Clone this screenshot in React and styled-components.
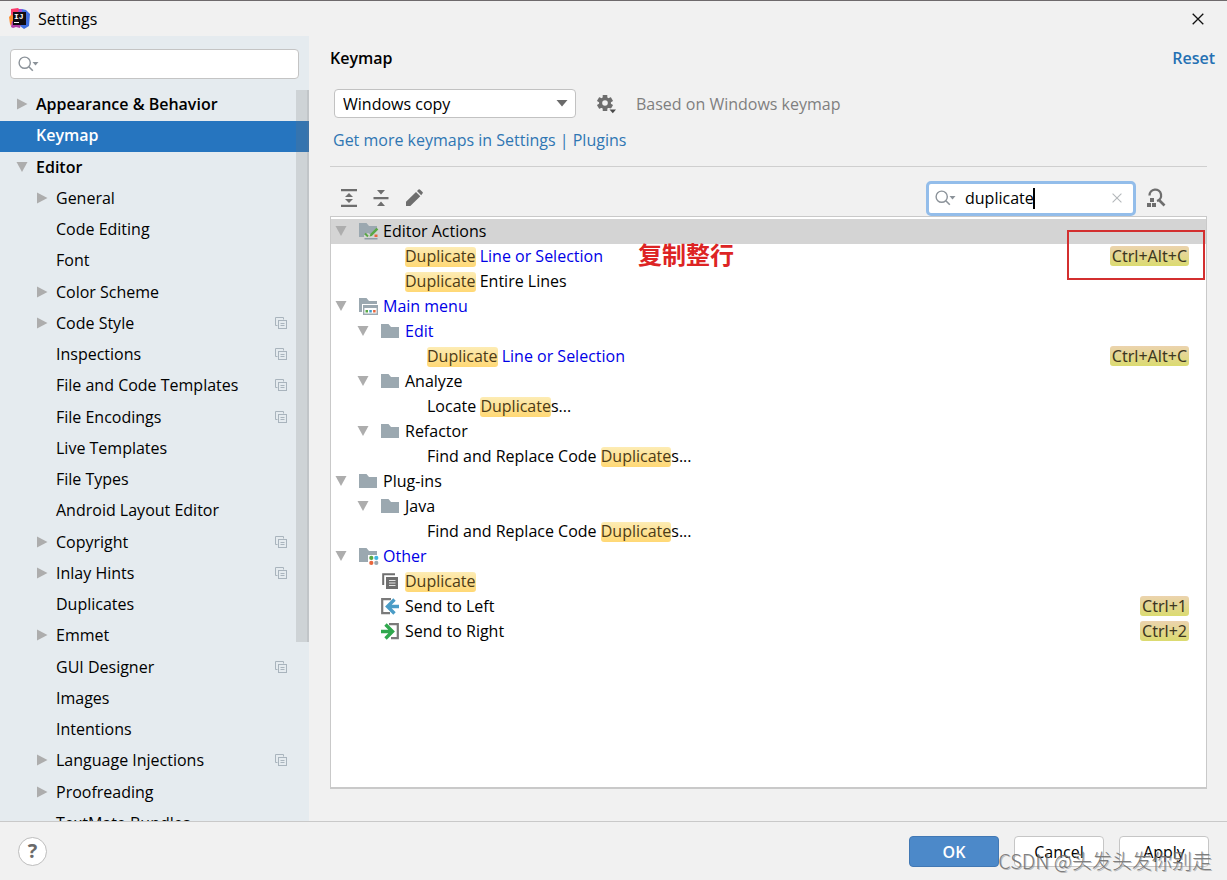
import React, { useState } from 'react';
import styled, { createGlobalStyle, css } from 'styled-components';

const GlobalStyle = createGlobalStyle`
  *, *::before, *::after { box-sizing: border-box; }
  body {
    margin: 0;
    background: #f1f1f1;
    color: #000;
    font-family: "Open Sans", "Noto Sans CJK SC", sans-serif;
    font-size: 16px;
    line-height: 24px;
  }
  button, input, select { font: inherit; color: inherit; }
  ul { list-style: none; margin: 0; padding: 0; }
  svg { display: block; flex: none; }
`;

const Window = styled.div`
  position: relative;
  display: flex;
  flex-direction: column;
  height: 100vh;
  overflow: hidden;
  border-top: 1px solid #6e6a6c;
`;

const TitleBar = styled.header`
  display: flex;
  align-items: center;
  gap: 8px;
  flex: none;
  height: 35px;
  padding: 0 23px 0 9px;
`;

const WindowTitle = styled.span`
  flex: 1;
`;

const PlainButton = styled.button`
  display: inline-flex;
  align-items: center;
  justify-content: center;
  flex: none;
  padding: 0;
  border: 0;
  background: none;
  cursor: pointer;
`;

const Body = styled.div`
  display: flex;
  flex: 1;
  min-height: 0;
`;

const Sidebar = styled.aside`
  position: relative;
  display: flex;
  flex-direction: column;
  flex: none;
  width: 309px;
  overflow: hidden;
  background: #e5ebef;
`;

const SidebarSearch = styled.label`
  display: flex;
  align-items: center;
  gap: 4px;
  flex: none;
  height: 30px;
  margin: 13px 10px 11px;
  padding: 0 7px;
  border: 1px solid #c4c4c4;
  border-radius: 4px;
  background: #fff;
`;

const BareInput = styled.input`
  min-width: 0;
  padding: 0;
  border: 0;
  outline: 0;
  background: transparent;
  ${(p) => (p.$fit ? css`field-sizing: content; caret-color: transparent;` : css`flex: 1;`)}
`;

const CategoryRow = styled.li`
  height: 31px;
  &:nth-child(4n + 3) { height: 32px; }
`;

const CategoryLink = styled.a`
  display: flex;
  align-items: center;
  height: 100%;
  padding: 0 22px 3px ${(p) => (p.$nested ? 36 : 16)}px;
  color: ${(p) => (p.$selected ? '#fff' : '#000')};
  background: ${(p) => (p.$selected ? '#2675bf' : 'transparent')};
  font-weight: ${(p) => (p.$nested ? 400 : 600)};
  text-decoration: none;
`;

const CategoryArrow = styled.span`
  flex: none;
  width: 20px;
  color: #adadad;
`;

const CategoryName = styled.span`
  flex: 1;
  white-space: nowrap;
`;

const ScrollThumb = styled.div`
  position: absolute;
  top: 54px;
  right: 0;
  width: 13px;
  height: 552px;
  border-right: 2px solid rgba(120, 120, 120, 0.15);
  background: rgba(115, 115, 115, 0.2);
`;

const Main = styled.main`
  display: flex;
  flex-direction: column;
  flex: 1;
  min-width: 0;
  padding: 10px 20px 32px 21px;
`;

const Heading = styled.div`
  display: flex;
  align-items: center;
  justify-content: space-between;
  margin-right: -8px;
`;

const PageTitle = styled.h1`
  margin: 0;
  font-size: 16px;
  font-weight: 600;
`;

const ResetLink = styled.a`
  color: #2470b3;
  font-weight: 600;
  text-decoration: none;
`;

const SchemeRow = styled.div`
  display: flex;
  align-items: center;
  margin-top: 19px;
  padding-left: 4px;
`;

const SelectBox = styled.span`
  position: relative;
  width: 242px;
`;

const SchemeSelect = styled.select`
  width: 100%;
  height: 29px;
  padding: 0 24px 0 8px;
  border: 1px solid #c2c2c2;
  border-radius: 4px;
  outline: 0;
  appearance: none;
  background: #fff;
`;

const SelectArrow = styled.svg`
  position: absolute;
  right: 8px;
  top: 11px;
  pointer-events: none;
`;

const GearButton = styled(PlainButton)`
  margin: 0 18px 0 20px;
`;

const Hint = styled.span`
  color: #7f7f7f;
`;

const PluginsLink = styled.a`
  align-self: flex-start;
  margin: 10px 0 14px;
  padding-left: 3px;
  color: #2f76b3;
  text-decoration: none;
`;

const Toolbar = styled.div`
  display: flex;
  align-items: center;
  gap: 14px;
  height: 50px;
  padding: 13px 41px 0 10px;
  border-top: 1px solid #cfcfcf;
`;

const SearchField = styled.label`
  display: flex;
  align-items: center;
  width: 210px;
  height: 35px;
  margin: 0 -4px 0 auto;
  padding: 0 11px 0 6px;
  border: 3px solid #93bdea;
  border-radius: 5px;
  background: #fff;
`;

const Caret = styled.span`
  flex: none;
  width: 2px;
  height: 21px;
  margin: 0 auto 0 -1px;
  background: #000;
`;

const SearchGlyph = styled.span`
  margin-right: 9px;
`;

const TreePanel = styled.section`
  position: relative;
  flex: 1;
  min-height: 0;
  padding-top: 2px;
  border: 1px solid #c9c9c9;
  border-bottom-width: 2px;
  background: #fff;
`;

const TreeRow = styled.li`
  display: flex;
  align-items: center;
  height: 25px;
  padding: 0 17px 2px ${(p) => 4 + p.$depth * 22}px;
  background: ${(p) => (p.$selected ? '#d4d4d4' : 'transparent')};
  color: ${(p) => (p.$changed ? '#0000e6' : '#000')};
  white-space: nowrap;
`;

const TreeArrow = styled.span`
  flex: none;
  width: 24px;
  color: #adadad;
`;

const TreeIcon = styled.span`
  flex: none;
  width: 24px;
`;

const TreeText = styled.span`
  flex: 1;
`;

const Match = styled.mark`
  display: inline-block;
  height: 20px;
  border-radius: 3px;
  background: linear-gradient(#fdecb4, #ffd875);
  color: #4c3b17;
  line-height: 19px;
`;

const Shortcut = styled.kbd`
  height: 20px;
  padding: 0 2px;
  border-radius: 3px;
  background: linear-gradient(#ecd3ae, #dbdb70);
  color: #3d3620;
  font-family: "Noto Sans", sans-serif;
  line-height: 20px;
`;

const NoteText = styled.strong`
  position: absolute;
  top: 19px;
  left: 307px;
  color: #dd2424;
  font-family: "Noto Sans CJK SC", sans-serif;
  font-size: 24px;
  line-height: 36px;
`;

const NoteBox = styled.div`
  position: absolute;
  top: 13px;
  right: 1px;
  width: 138px;
  height: 50px;
  border: 2px solid #d32f2f;
`;

const Footer = styled.footer`
  display: flex;
  align-items: center;
  gap: 15px;
  flex: none;
  height: 59px;
  padding: 0 18px;
  border-top: 1px solid #c9c9c9;
`;

const HelpButton = styled(PlainButton)`
  width: 29px;
  height: 29px;
  margin-right: auto;
  border: 1px solid #bdbdbd;
  border-radius: 50%;
  background: #fff;
  color: #6a6a6a;
  font-size: 20px;
  font-weight: 700;
`;

const DialogButton = styled.button`
  width: 90px;
  height: 31px;
  padding: 2px 0 0;
  border: 1px solid ${(p) => (p.$primary ? '#4178b4' : '#c6c6c6')};
  border-radius: 4px;
  background: ${(p) => (p.$primary ? '#4c89c9' : '#fff')};
  color: ${(p) => (p.$primary ? '#fff' : '#000')};
  font-weight: ${(p) => (p.$primary ? 600 : 400)};
`;

const Watermark = styled.span`
  position: absolute;
  right: 15px;
  bottom: 6px;
  color: rgba(110, 110, 110, 0.9);
  font-family: "Noto Sans CJK SC", sans-serif;
  font-size: 20px;
  font-weight: 300;
  line-height: 26px;
  text-shadow: 1px 1px 0 rgba(150, 150, 150, 0.6);
  pointer-events: none;
`;

const Logo = () => (
  <svg width="21" height="21" viewBox="0 0 21 21" aria-hidden="true">
    <path d="M2 1 9 0l3 3-2 8-9 2 1-4z" fill="#fb3a6b" />
    <path d="M0 9l3-3 2 5-3 7-1-2z" fill="#fc8c2f" />
    <path d="M13 1l4 1 4 4-1 12-5 3-4-3z" fill="#3f6fe0" />
    <path d="M2 19l1-6 9 2-1 5-4-1-3 1z" fill="#b03fa8" />
    <path d="M10 1l3 0v4H9z" fill="#a04ad0" />
    <rect x="4" y="4" width="13" height="13" fill="#100c12" />
    <rect x="5" y="14" width="5" height="1" fill="#fff" />
    <text x="5" y="11" fill="#fff" fontSize="8" fontWeight="700" fontFamily="Liberation Mono, monospace">IJ</text>
  </svg>
);

const CloseIcon = ({ size = 12, color = '#111', weight = 1.3 }) => (
  <svg width={size} height={size} viewBox="0 0 12 12" stroke={color} strokeWidth={weight} aria-hidden="true">
    <path d="M.7.7l10.6 10.6M11.3.7L.7 11.3" />
  </svg>
);

const SearchIcon = () => (
  <svg width="21" height="16" viewBox="0 0 21 16" aria-hidden="true">
    <circle cx="6.7" cy="6.7" r="5.6" fill="none" stroke="#8b9299" strokeWidth="1.4" />
    <path d="M10.8 10.8l4 4" stroke="#8b9299" strokeWidth="1.6" />
    <path d="M14.5 6h6L17.500 9.500z" fill="#8b9299" />
  </svg>
);

const Triangle = ({ open }) =>
  open ? (
    <svg width="12" height="12" viewBox="0 0 12 12" aria-hidden="true">
      <path d="M.5 1h11L6 11z" fill="currentColor" />
    </svg>
  ) : (
    <svg width="12" height="12" viewBox="0 0 12 12" aria-hidden="true">
      <path d="M1 .5v11L11.500 6z" fill="currentColor" />
    </svg>
  );

const ProjectIcon = () => (
  <svg width="12" height="12" viewBox="0 0 12 12" fill="none" stroke="#a9b4bd" aria-hidden="true">
    <path d="M2.500 8.500h-2v-8h8v2" />
    <rect x="3.500" y="3.500" width="8" height="8" />
    <path d="M5.500 6.500h4M5.500 8.500h4" />
  </svg>
);

const GearIcon = () => (
  <svg width="22" height="20" viewBox="0 0 22 20" aria-hidden="true">
    <g fill="#6e6e6e">
      {[0, 60, 120].map((a) => (
        <rect key={a} x="6.700" y="1" width="4.600" height="16" rx=".5" transform={`rotate(${a} 9 9)`} />
      ))}
      <circle cx="9" cy="9" r="6" />
    </g>
    <circle cx="9" cy="9" r="2.800" fill="#f1f1f1" />
    <path d="M12 14.500h9l-4.500 5z" fill="#f1f1f1" />
    <path d="M13.500 15.500h6.500l-3.200 3.700z" fill="#4a4a4a" />
  </svg>
);

const ExpandIcon = () => (
  <svg width="18" height="18" viewBox="0 0 18 18" fill="#6e6e6e" aria-hidden="true">
    <path d="M1 0h16v2.200H1zM1 15.800h16V18H1zM5 8l4-4 4 4zM5 10h8l-4 4z" />
  </svg>
);

const CollapseIcon = () => (
  <svg width="18" height="18" viewBox="0 0 18 18" fill="#6e6e6e" aria-hidden="true">
    <path d="M1.500 8h15v2.200h-15zM5 1h8L9 5.500zM5 17h8l-4-4.500z" />
  </svg>
);

const PencilIcon = () => (
  <svg width="20" height="18" viewBox="0 0 20 18" fill="#6e6e6e" aria-hidden="true">
    <path d="M2 17v-4.200L12 3l4.300 4.300L6.300 17zM13 2l1.500-1.500q.7-.6 1.400 0l2.600 2.600q.7.700 0 1.400L17.200 6.200z" />
  </svg>
);

const ShortcutSearchIcon = () => (
  <svg width="20" height="20" viewBox="0 0 20 20" aria-hidden="true">
    <path d="M3.500 7.500A5.800 5.800 0 1 1 11 13" fill="none" stroke="#6e6e6e" strokeWidth="2.300" />
    <path d="M12.500 11.500l6 6" stroke="#6e6e6e" strokeWidth="2.600" />
    <path d="M4 10h4v4H4zM1 15h4v4H1zM6 15h4v4H6z" fill="#6e6e6e" />
  </svg>
);

const FolderIcon = () => (
  <svg width="20" height="19" viewBox="0 0 20 19" aria-hidden="true">
    <path d="M0 3h7.500l2.500 3h8v11H0z" fill="#9ba8b0" />
  </svg>
);

const EditorFolderIcon = () => (
  <svg width="20" height="19" viewBox="0 0 20 19" aria-hidden="true">
    <path d="M0 2h7.500l2.500 3h8v3l-6 6-3-2-4 2v2H0z" fill="#9ba8b0" />
    <path d="M10.500 15.500l1-2.800L17.500 6.700l1.800 1.800-6.500 6.500z" fill="#59a844" />
    <path d="M6 12.500l3 3" stroke="#59a844" strokeWidth="2" />
    <path d="M15.500 13.500h3v2.500h-3z" fill="#e8663c" />
    <path d="M5.500 17h13v1.500h-13z" fill="#8f9da6" />
  </svg>
);

const MenuFolderIcon = () => (
  <svg width="20" height="19" viewBox="0 0 20 19" aria-hidden="true">
    <path d="M0 2h7.500l2.500 3h8v3H3v8H0z" fill="#9ba8b0" />
    <path d="M4.700 9.700h13.600v8.600H4.700z" fill="#fff" stroke="#9ba8b0" strokeWidth="1.400" />
    <path d="M4 9h15v3H4z" fill="#9ba8b0" />
    <path d="M6.500 14H9v2.500H6.500z" fill="#59a844" />
    <path d="M10.300 14h2.500v2.500h-2.500z" fill="#3f9cc9" />
    <path d="M14.100 14h2.500v2.500h-2.500z" fill="#e8663c" />
  </svg>
);

const OtherFolderIcon = () => (
  <svg width="20" height="19" viewBox="0 0 20 19" aria-hidden="true">
    <path d="M0 2h7.500l2.500 3h8v4H9v7H0z" fill="#9ba8b0" />
    <circle cx="12.300" cy="11.900" r="2.100" fill="#59a844" />
    <circle cx="17.300" cy="11.900" r="2.100" fill="#40b6e0" />
    <circle cx="12.300" cy="16.900" r="2.100" fill="#e8663c" />
    <circle cx="17.300" cy="16.900" r="2.100" fill="#9ba8b0" />
  </svg>
);

const DuplicateIcon = () => (
  <svg width="20" height="19" viewBox="0 0 20 19" aria-hidden="true">
    <path d="M2.200 14V3.200H14" fill="none" stroke="#6e6e6e" strokeWidth="2" />
    <path d="M5 6h12v12H5z" fill="#6e6e6e" />
    <path d="M8 9.500h6.500M8 12h6.500M8 14.500h6.500" stroke="#e3e3e3" strokeWidth="1.200" />
  </svg>
);

const SendLeftIcon = () => (
  <svg width="20" height="19" viewBox="0 0 20 19" fill="none" aria-hidden="true">
    <path d="M10 3.200H1.200V17.200H9" stroke="#7a7a7a" strokeWidth="2.200" />
    <path d="M13.500 3.500L6.500 10.500l7 7M7 10.500h11" stroke="#4a9cc6" strokeWidth="3.400" />
  </svg>
);

const SendRightIcon = () => (
  <svg width="20" height="19" viewBox="0 0 20 19" fill="none" aria-hidden="true">
    <path d="M8 3.200h8.800V17.200H10" stroke="#7a7a7a" strokeWidth="2.200" />
    <path d="M4.500 3.500l7 7-7 7M11 10.500H0" stroke="#2fa84d" strokeWidth="3.400" />
  </svg>
);

const categories = [
  { name: 'Appearance & Behavior', top: true, arrow: 'closed' },
  { name: 'Keymap', top: true, selected: true },
  { name: 'Editor', top: true, arrow: 'open' },
  { name: 'General', arrow: 'closed' },
  { name: 'Code Editing' },
  { name: 'Font' },
  { name: 'Color Scheme', arrow: 'closed' },
  { name: 'Code Style', arrow: 'closed', project: true },
  { name: 'Inspections', project: true },
  { name: 'File and Code Templates', project: true },
  { name: 'File Encodings', project: true },
  { name: 'Live Templates' },
  { name: 'File Types' },
  { name: 'Android Layout Editor' },
  { name: 'Copyright', arrow: 'closed', project: true },
  { name: 'Inlay Hints', arrow: 'closed', project: true },
  { name: 'Duplicates' },
  { name: 'Emmet', arrow: 'closed' },
  { name: 'GUI Designer', project: true },
  { name: 'Images' },
  { name: 'Intentions' },
  { name: 'Language Injections', arrow: 'closed', project: true },
  { name: 'Proofreading', arrow: 'closed' },
  { name: 'TextMate Bundles' },
];

const actions = [
  { depth: 0, group: true, icon: <EditorFolderIcon />, text: 'Editor Actions', selected: true },
  { depth: 1, text: 'Duplicate Line or Selection', changed: true, keys: 'Ctrl+Alt+C' },
  { depth: 1, text: 'Duplicate Entire Lines' },
  { depth: 0, group: true, icon: <MenuFolderIcon />, text: 'Main menu', changed: true },
  { depth: 1, group: true, icon: <FolderIcon />, text: 'Edit', changed: true },
  { depth: 2, text: 'Duplicate Line or Selection', changed: true, keys: 'Ctrl+Alt+C' },
  { depth: 1, group: true, icon: <FolderIcon />, text: 'Analyze' },
  { depth: 2, text: 'Locate Duplicates...' },
  { depth: 1, group: true, icon: <FolderIcon />, text: 'Refactor' },
  { depth: 2, text: 'Find and Replace Code Duplicates...' },
  { depth: 0, group: true, icon: <FolderIcon />, text: 'Plug-ins' },
  { depth: 1, group: true, icon: <FolderIcon />, text: 'Java' },
  { depth: 2, text: 'Find and Replace Code Duplicates...' },
  { depth: 0, group: true, icon: <OtherFolderIcon />, text: 'Other', changed: true },
  { depth: 1, icon: <DuplicateIcon />, text: 'Duplicate' },
  { depth: 1, icon: <SendLeftIcon />, text: 'Send to Left', keys: 'Ctrl+1' },
  { depth: 1, icon: <SendRightIcon />, text: 'Send to Right', keys: 'Ctrl+2' },
];

function Highlighted({ text }) {
  return text
    .split(/(Duplicate)/)
    .map((part, i) => (part === 'Duplicate' ? <Match key={i}>{part}</Match> : part));
}

export default function App() {
  const [query, setQuery] = useState('duplicate');
  const [filter, setFilter] = useState('');

  return (
    <Window>
      <GlobalStyle />
      <TitleBar>
        <Logo />
        <WindowTitle>Settings</WindowTitle>
        <PlainButton aria-label="Close"><CloseIcon /></PlainButton>
      </TitleBar>

      <Body>
        <Sidebar>
          <SidebarSearch>
            <SearchIcon />
            <BareInput aria-label="Search settings" value={filter} onChange={(e) => setFilter(e.target.value)} />
          </SidebarSearch>
          <nav>
            <ul>
              {categories.map((c) => (
                <CategoryRow key={c.name}>
                  <CategoryLink href="#" $nested={!c.top} $selected={c.selected}>
                    <CategoryArrow>{c.arrow && <Triangle open={c.arrow === 'open'} />}</CategoryArrow>
                    <CategoryName>{c.name}</CategoryName>
                    {c.project && <ProjectIcon />}
                  </CategoryLink>
                </CategoryRow>
              ))}
            </ul>
          </nav>
          <ScrollThumb />
        </Sidebar>

        <Main>
          <Heading>
            <PageTitle>Keymap</PageTitle>
            <ResetLink href="#">Reset</ResetLink>
          </Heading>
          <SchemeRow>
            <SelectBox>
              <SchemeSelect aria-label="Keymap scheme">
                <option>Windows copy</option>
              </SchemeSelect>
              <SelectArrow width="12" height="7" viewBox="0 0 12 7" aria-hidden="true">
                <path d="M.5 0h11L6 6.500z" fill="#6a6a6a" />
              </SelectArrow>
            </SelectBox>
            <GearButton aria-label="Scheme actions"><GearIcon /></GearButton>
            <Hint>Based on Windows keymap</Hint>
          </SchemeRow>
          <PluginsLink href="#">Get more keymaps in Settings | Plugins</PluginsLink>

          <Toolbar>
            <PlainButton aria-label="Expand all"><ExpandIcon /></PlainButton>
            <PlainButton aria-label="Collapse all"><CollapseIcon /></PlainButton>
            <PlainButton aria-label="Edit shortcut"><PencilIcon /></PlainButton>
            <SearchField>
              <SearchGlyph><SearchIcon /></SearchGlyph>
              <BareInput $fit aria-label="Search actions" value={query} onChange={(e) => setQuery(e.target.value)} />
              <Caret />
              <PlainButton aria-label="Clear" onClick={() => setQuery('')}>
                <CloseIcon size={10} color="#b4b8bb" />
              </PlainButton>
            </SearchField>
            <PlainButton aria-label="Find by shortcut"><ShortcutSearchIcon /></PlainButton>
          </Toolbar>

          <TreePanel>
            <ul>
              {actions.map((a, i) => (
                <TreeRow key={i} $depth={a.depth} $selected={a.selected} $changed={a.changed}>
                  <TreeArrow>{a.group && <Triangle open />}</TreeArrow>
                  <TreeIcon>{a.icon}</TreeIcon>
                  <TreeText><Highlighted text={a.text} /></TreeText>
                  {a.keys && <Shortcut>{a.keys}</Shortcut>}
                </TreeRow>
              ))}
            </ul>
            <NoteText>复制整行</NoteText>
            <NoteBox />
          </TreePanel>
        </Main>
      </Body>

      <Footer>
        <HelpButton aria-label="Help">?</HelpButton>
        <DialogButton $primary>OK</DialogButton>
        <DialogButton>Cancel</DialogButton>
        <DialogButton>Apply</DialogButton>
      </Footer>
      <Watermark>CSDN @头发头发你别走</Watermark>
    </Window>
  );
}
